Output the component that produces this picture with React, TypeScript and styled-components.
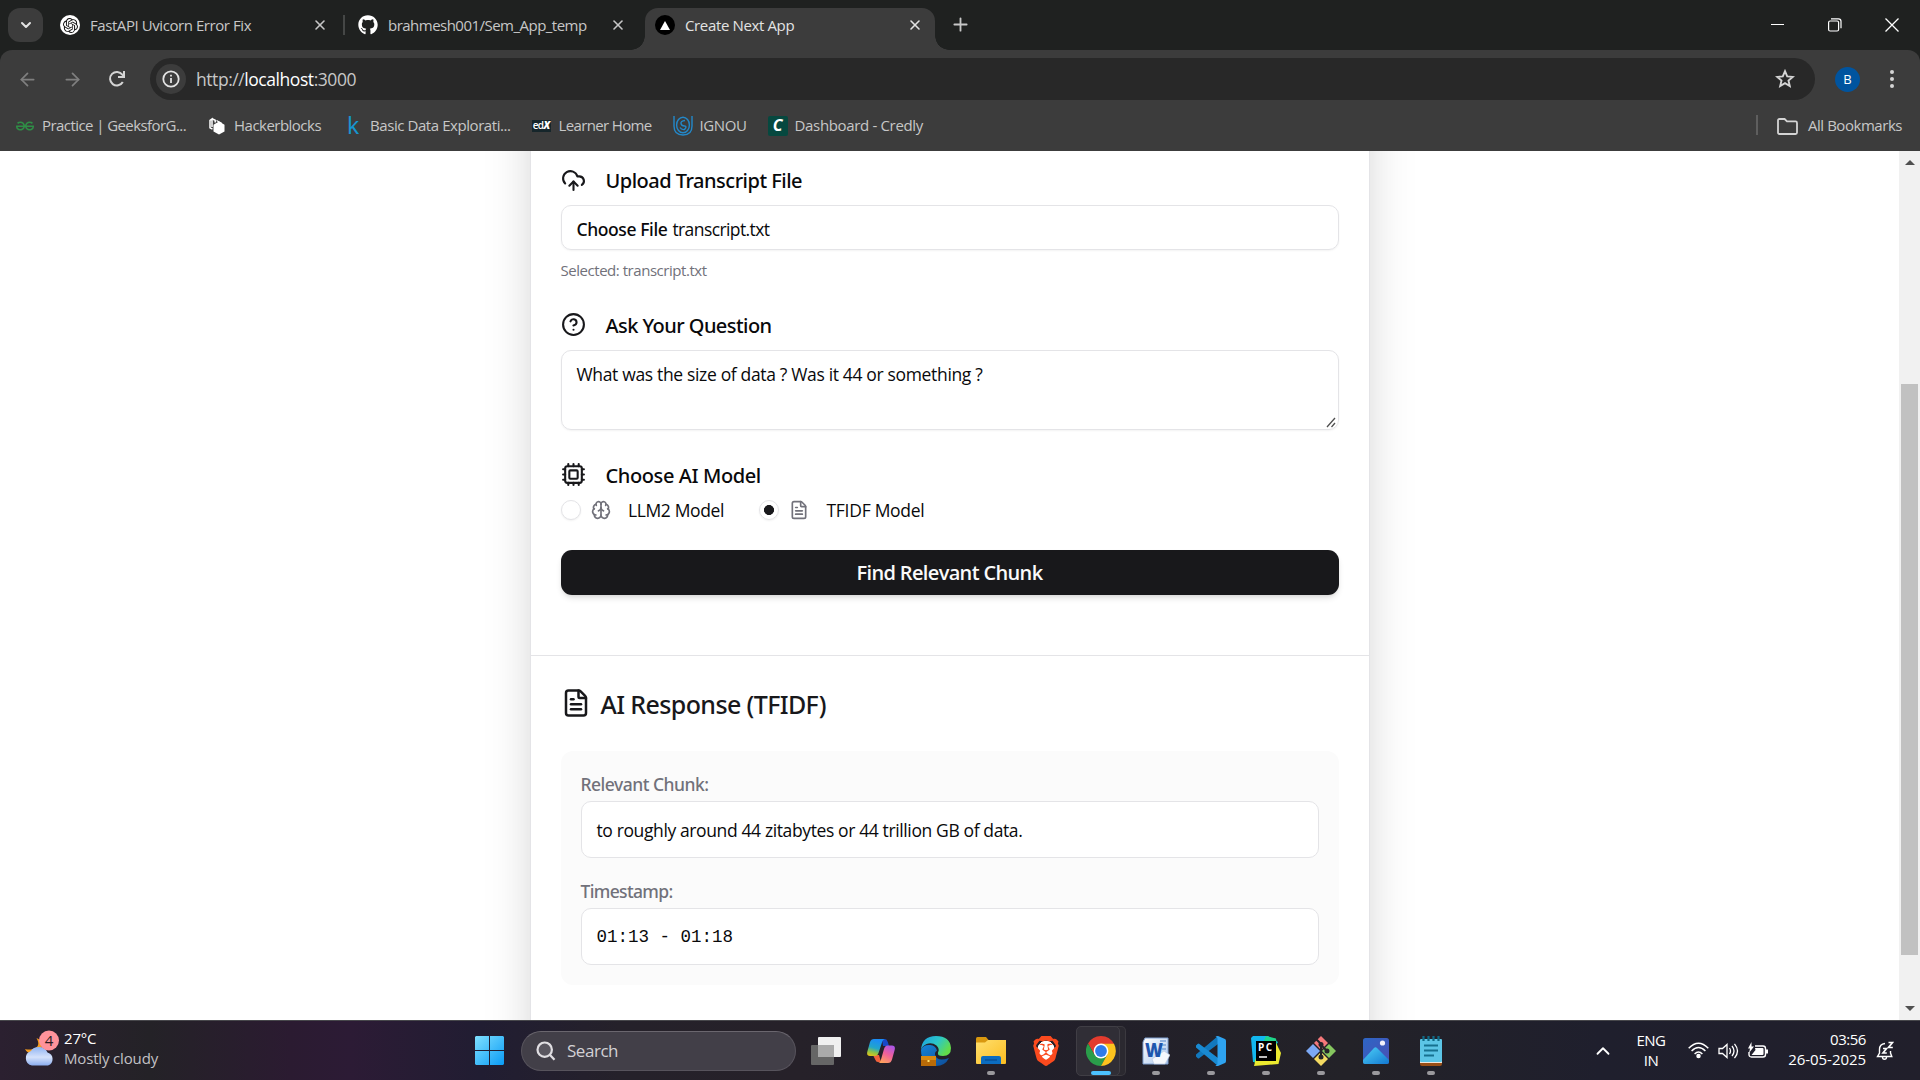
import React from 'react';
import styled, { createGlobalStyle } from 'styled-components';
import {
  ArrowLeft, ArrowRight, ChevronDown, ChevronUp, CloudUpload, CircleHelp, Cpu, Brain, FileText, Plus, X,
} from 'lucide-react';
import { SiOpenai, SiGeeksforgeeks, SiBrave } from 'react-icons/si';
import { FaGithub } from 'react-icons/fa';

const ui = '"Open Sans", "Noto Sans", sans-serif';
const medium = '"Noto Sans", "Open Sans", sans-serif';

const GlobalStyle = createGlobalStyle`
  * { box-sizing: border-box; }
  body { margin: 0; background: #fff; overflow: hidden; font-family: ${ui}; }
  svg { display: block; flex: none; }
`;

const Screen = styled.div`
  width: 1920px;
  height: 1080px;
  display: flex;
  flex-direction: column;
  overflow: hidden;
`;

/* ---------- browser chrome ---------- */

const TabStrip = styled.div`
  height: 50px;
  flex: none;
  background: #1f2120;
  display: flex;
  align-items: flex-start;
  color: #c7c7c7;
`;

const TabSearch = styled.button`
  width: 35px;
  height: 34px;
  margin: 8px 0 0 8px;
  padding: 0;
  border: 0;
  border-radius: 12px;
  background: #3c3c3c;
  color: #e3e3e3;
  display: grid;
  place-items: center;
`;

const Tab = styled.div<{ $width: number; $left: number; $right: number; $active?: boolean }>`
  position: relative;
  width: ${p => p.$width}px;
  height: 42px;
  margin-top: 8px;
  padding: 0 ${p => p.$right}px 8px ${p => p.$left}px;
  display: flex;
  align-items: center;
  gap: 10px;
  border-radius: 13px 13px 0 0;
  background: ${p => (p.$active ? '#3c3c3c' : 'transparent')};
  color: ${p => (p.$active ? '#e3e3e3' : '#c7c7c7')};
  &::before, &::after {
    content: '';
    display: ${p => (p.$active ? 'block' : 'none')};
    position: absolute;
    bottom: 0;
    width: 14px;
    height: 14px;
  }
  &::before { left: -14px; background: radial-gradient(circle at 0 0, transparent 13.5px, #3c3c3c 14px); }
  &::after { right: -14px; background: radial-gradient(circle at 100% 0, transparent 13.5px, #3c3c3c 14px); }
`;

const TabTitle = styled.span<{ $ls: number }>`
  flex: 1;
  font-size: 15px;
  line-height: 20px;
  letter-spacing: ${p => p.$ls}px;
  white-space: nowrap;
`;

const TabDivider = styled.i`
  width: 2px;
  height: 20px;
  margin-top: 15px;
  background: #454746;
`;

const Favicon = styled.span<{ $bg: string; $fg: string }>`
  width: 20px;
  height: 20px;
  flex: none;
  border-radius: 50%;
  background: ${p => p.$bg};
  color: ${p => p.$fg};
  display: grid;
  place-items: center;
`;

const NewTab = styled.span`
  margin: 14px 0 0 15px;
`;

const WindowControls = styled.div`
  margin-left: auto;
  padding: 18px 21px 0 0;
  display: flex;
  gap: 43px;
  color: #fff;
`;

const ToolbarBacking = styled.div`
  flex: none;
  background: #1f2120;
`;

const Toolbar = styled.div`
  height: 58px;
  padding: 8px 20px 8px 17px;
  border-radius: 12px 12px 0 0;
  background: #3c3c3c;
  display: flex;
  align-items: center;
  color: #c7c7c7;
`;

const NavButtons = styled.div`
  width: 133px;
  display: flex;
  gap: 24px;
`;

const NavIcon = styled.span<{ $off?: boolean }>`
  color: ${p => (p.$off ? '#7f7f7f' : '#d4d4d4')};
`;

const AddressBar = styled.div`
  width: 1665px;
  height: 42px;
  padding: 0 20px 0 6px;
  border-radius: 21px;
  background: #282828;
  display: flex;
  align-items: center;
`;

const SiteInfo = styled.span`
  width: 30px;
  height: 30px;
  border-radius: 50%;
  background: #3c3c3c;
  display: grid;
  place-items: center;
`;

const Url = styled.span`
  flex: 1;
  margin-left: 10px;
  font-size: 17.5px;
  letter-spacing: -0.44px;
  line-height: 24px;
  color: #c7c7c7;
  b { font-weight: 400; color: #fff; }
`;

const Avatar = styled.span`
  width: 25px;
  height: 25px;
  margin: 0 29px 0 20px;
  border-radius: 50%;
  background: #00549f;
  color: #fff;
  font: 13px/25px ${ui};
  text-align: center;
`;

const BookmarksBar = styled.div`
  height: 43px;
  flex: none;
  padding: 0 18px 9px 0;
  background: #3c3c3c;
  display: flex;
  align-items: center;
  color: #c7c7c7;
`;

const Bookmark = styled.span<{ $left: number; $gap: number; $ls: number }>`
  margin-left: ${p => p.$left}px;
  display: flex;
  align-items: center;
  gap: ${p => p.$gap}px;
  font-size: 15px;
  line-height: 20px;
  letter-spacing: ${p => p.$ls}px;
  white-space: nowrap;
  svg { margin-top: 2px; }
`;

const KaggleBadge = styled.span`
  width: 12px;
  color: #1795cf;
  font: 400 23px/20px ${medium};
`;

const EdxBadge = styled.span`
  width: 19px;
  height: 12px;
  margin-top: 1px;
  background: #16262b;
  color: #fff;
  font: 600 10px/10px ${ui};
  letter-spacing: -0.7px;
  text-align: center;
  b { font-style: italic; font-weight: 800; }
`;

const CredlyBadge = styled.span`
  width: 20px;
  height: 20px;
  margin-top: 1px;
  border-radius: 2px;
  background: #06483f;
  color: #fff;
  font: italic 700 16px/19px ${ui};
  text-align: center;
`;

const BarDivider = styled.i`
  width: 2.5px;
  height: 20px;
  margin-left: auto;
  background: #5e5e5e;
`;

/* ---------- page ---------- */

const Viewport = styled.div`
  height: 869px;
  flex: none;
  background: #fff;
  display: flex;
  overflow: hidden;
`;

const Page = styled.main`
  flex: 1;
  display: flex;
  justify-content: center;
  overflow: hidden;
`;

const Card = styled.section`
  width: 840px;
  height: 1200px;
  margin-top: -120px;
  padding-top: 134px;
  flex: none;
  background: #fff;
  border: 1px solid #e4e4e7;
  border-top: 0;
  box-shadow: 0 25px 50px -12px rgba(0, 0, 0, 0.25);
`;

const Form = styled.div`
  padding: 0 30px 60px;
  display: flex;
  flex-direction: column;
`;

const FieldLabel = styled.div<{ $top?: number; $ls: number }>`
  height: 30px;
  margin: ${p => p.$top ?? 0}px 0 10px;
  display: flex;
  align-items: center;
  gap: 20px;
  font: 500 20px/30px ${medium};
  letter-spacing: ${p => p.$ls}px;
  color: #09090b;
  padding-top: 1px;
  svg { color: #18181b; margin-bottom: ${p => (p.$top ? 3 : 1)}px; }
`;

const InputBox = styled.div`
  height: 45px;
  padding: 0 15px;
  border: 1px solid #e4e4e7;
  border-radius: 10px;
  box-shadow: 0 1px 2px rgba(0, 0, 0, 0.05);
  font-size: 17.5px;
  line-height: 47px;
  letter-spacing: -0.59px;
  color: #09090b;
`;

const ChooseFile = styled.span`
  margin-right: 5px;
  font-family: ${medium};
  font-weight: 500;
  letter-spacing: -0.4px;
`;

const Hint = styled.div`
  height: 20px;
  margin: 10px 0 1px;
  font-size: 15px;
  line-height: 20px;
  letter-spacing: -0.46px;
  color: #71717a;
`;

const QuestionBox = styled.div`
  position: relative;
  height: 80px;
  padding: 10px 15px;
  border: 1px solid #e4e4e7;
  border-radius: 10px;
  box-shadow: 0 1px 2px rgba(0, 0, 0, 0.05);
  font-size: 17.5px;
  line-height: 26px;
  letter-spacing: -0.34px;
  color: #09090b;
`;

const Grip = styled.svg`
  position: absolute;
  right: 2px;
  bottom: 1px;
`;

const RadioRow = styled.div`
  height: 20px;
  display: flex;
  align-items: center;
`;

const Option = styled.label<{ $width: number; $gap: number; $ls: number }>`
  width: ${p => p.$width}px;
  display: flex;
  align-items: center;
  font-size: 17.5px;
  line-height: 24px;
  letter-spacing: ${p => p.$ls}px;
  color: #09090b;
  svg { margin: 0 ${p => p.$gap}px 0 10px; color: #71717a; }
`;

const Radio = styled.span<{ $checked?: boolean }>`
  width: 20px;
  height: 20px;
  border: 1px solid #e4e4e7;
  border-radius: 50%;
  box-shadow: 0 1px 2px rgba(0, 0, 0, 0.06);
  background: ${p => (p.$checked ? 'radial-gradient(circle, #18181b 4.7px, #fff 5.3px)' : '#fff')};
`;

const SubmitButton = styled.button`
  height: 45px;
  margin-top: 30px;
  padding: 0;
  border: 0;
  border-radius: 11px;
  background: #18181b;
  box-shadow: 0 4px 6px -1px rgba(0, 0, 0, 0.12), 0 2px 4px -2px rgba(0, 0, 0, 0.1);
  color: #fafafa;
  font: 600 20px/45px ${ui};
  letter-spacing: -0.65px;
`;

const Response = styled.div`
  padding: 23px 30px 0;
  border-top: 1px solid #e4e4e7;
`;

const ResponseTitle = styled.h2`
  height: 50px;
  margin: 0 0 22px;
  display: flex;
  align-items: center;
  gap: 10px;
  font: 500 25px/50px ${medium};
  letter-spacing: -0.62px;
  color: #18181b;
  svg { margin-bottom: 2px; }
`;

const Panel = styled.div`
  height: 234px;
  padding: 21px 20px 20px;
  border-radius: 12px;
  background: #fbfbfb;
`;

const PanelLabel = styled.div<{ $top?: number; $ls: number }>`
  height: 25px;
  margin: ${p => p.$top ?? 0}px 0 4px;
  font: 500 17.5px/25px ${medium};
  letter-spacing: ${p => p.$ls}px;
  color: #71717a;
`;

const PanelValue = styled.div<{ $mono?: boolean }>`
  height: 57px;
  padding: 0 15px;
  border: 1px solid #e4e4e7;
  border-radius: 10px;
  background: #fff;
  font-family: ${p => (p.$mono ? '"Liberation Mono", monospace' : ui)};
  font-size: 17.5px;
  line-height: ${p => (p.$mono ? 56 : 57)}px;
  letter-spacing: ${p => (p.$mono ? 0 : -0.38)}px;
  color: #09090b;
`;

const Scrollbar = styled.div`
  width: 21px;
  padding: 9px 0 9px;
  background: #f1f1f1;
  display: flex;
  flex-direction: column;
  align-items: center;
`;

const ScrollThumb = styled.i`
  width: 17px;
  height: 571px;
  margin: 219px 0 auto;
  background: #c1c1c1;
`;

/* ---------- taskbar ---------- */

const Taskbar = styled.footer`
  height: 60px;
  flex: none;
  border-top: 1px solid #47474b;
  background: linear-gradient(90deg, #2b2030 0, #242227 150px, #2b1b31 290px, #2c1b35 350px, #211d32 480px, #25212a 620px, #262129 800px, #221f2a 1000px, #232228 1350px, #1f1f2d 1600px, #211f2b 1920px);
  display: flex;
  align-items: center;
  color: #fff;
`;

const Weather = styled.div`
  width: 475px;
  padding-left: 24px;
  display: flex;
  align-items: center;
  gap: 5px;
  svg { margin-top: -5px; }
`;

const WeatherText = styled.div`
  margin-top: -5px;
  font-size: 15px;
  line-height: 20px;
  letter-spacing: -0.16px;
  small { display: block; font-size: 15px; color: #c3c1c5; }
`;

const SearchPill = styled.div`
  width: 275px;
  height: 40px;
  margin: 0 2px 0 17px;
  padding-left: 14px;
  border: 1px solid #57535c;
  border-top-color: #6a666e;
  border-radius: 20px;
  background: #423f48;
  display: flex;
  align-items: center;
  gap: 11px;
  font-size: 17px;
  letter-spacing: -0.47px;
  color: #d3d1d5;
`;

const AppSlot = styled.div<{ $mark?: string; $markWidth?: number }>`
  position: relative;
  width: 55px;
  height: 59px;
  display: grid;
  place-items: center;
  &::after {
    content: '';
    position: absolute;
    bottom: 5px;
    left: calc(50% - ${p => (p.$markWidth ?? 8) / 2}px);
    width: ${p => p.$markWidth ?? 8}px;
    height: 4px;
    border-radius: 2px;
    background: ${p => p.$mark ?? 'transparent'};
  }
`;

const ActiveTile = styled.div`
  width: 44px;
  height: 50px;
  margin-right: 6px;
  padding-left: 6px;
  border: 1px solid #403e45;
  border-radius: 5px;
  background: #302e36;
  box-shadow: 6px 0 0 -1px #2b2930, 6px 0 0 0 #3b393f;
  display: grid;
  place-items: center;
`;

const Tray = styled.div`
  margin-left: auto;
  padding-right: 26px;
  display: flex;
  align-items: center;
`;

const Language = styled.div`
  width: 40px;
  margin: -1px 17px 0 17px;
  font-size: 15px;
  line-height: 20px;
  letter-spacing: -0.5px;
  text-align: center;
`;

const TrayIcons = styled.div`
  display: flex;
  align-items: center;
  gap: 9px;
`;

const Clock = styled.div`
  width: 98px;
  margin: -4px 10px 0 0;
  font-size: 15px;
  line-height: 20px;
  letter-spacing: -0.05px;
  text-align: right;
  span { display: block; }
  span:first-child { letter-spacing: -0.45px; }
`;

/* ---------- drawings ---------- */

const Reload = () => (
  <svg width="20" height="20" viewBox="0 0 20 20" fill="none" stroke="currentColor" strokeWidth="2">
    <path d="M15.8 13A6.8 6.8 0 1 1 15.3 5.6L17 7.4" /><path d="M17 2v6h-6" />
  </svg>
);
const Info = () => (
  <svg width="18" height="18" viewBox="0 0 18 18" fill="none" stroke="#e3e3e3" strokeWidth="1.8">
    <circle cx="9" cy="9" r="7.7" /><path d="M9 8v5M9 4.8v1.8" />
  </svg>
);
const Star = () => (
  <svg width="20" height="20" viewBox="0 0 20 20" fill="none" stroke="#d4d4d4" strokeWidth="1.9">
    <path d="M10 2.2l2.2 5.2 5.6.5-4.3 3.7 1.3 5.5L10 14.2l-4.8 2.9 1.3-5.5L2.2 7.9l5.6-.5z" />
  </svg>
);
const Dots = () => (
  <svg width="6" height="20" viewBox="0 0 6 20" fill="#d4d4d4">
    <circle cx="3" cy="3" r="2" /><circle cx="3" cy="10" r="2" /><circle cx="3" cy="17" r="2" />
  </svg>
);
const Folder = () => (
  <svg width="21" height="17" viewBox="0 0 21 17" fill="none" stroke="#d4d4d4" strokeWidth="1.8">
    <path d="M1 14.5V2.5Q1 1 2.5 1H7.6L10 3.4h8.6Q20 3.4 20 4.9v9.6Q20 16 18.5 16h-16Q1 16 1 14.5z" />
  </svg>
);
const Minimise = () => <svg width="14" height="14"><path d="M0 6.5h13" stroke="#fff" /></svg>;
const Restore = () => (
  <svg width="14" height="14" fill="none" stroke="#fff" strokeWidth="1.2">
    <rect x=".6" y="3" width="10" height="10" rx="1.5" /><path d="M3 .8h7.5q2.5 0 2.5 2.5v7" />
  </svg>
);
const CloseWindow = () => <svg width="14" height="14" stroke="#fff" strokeWidth="1.3"><path d="M.5 .5l13 13M13.5 .5l-13 13" /></svg>;
const HackerblocksLogo = () => (
  <svg width="16" height="18" viewBox="0 0 16 18">
    <path d="M3.5 12.200L1 10.800V3.400L3 2v8" fill="none" stroke="#fff" strokeWidth="1.500" />
    <path d="M3 1.800l3.200 1.400v2.400" fill="none" stroke="#fff" strokeWidth="1.500" />
    <path d="M10 4.600l5.500 3.200v6.600L10 17.600l-5.500-3.200V7.800z" fill="#fff" />
    <path d="M7.500 3.400l4.800 2.800v3.200" stroke="#fff" strokeWidth="1.200" fill="none" />
  </svg>
);
const IgnouLogo = () => (
  <svg width="20" height="20" viewBox="0 0 20 20" fill="none" stroke="#2388c9" strokeWidth="1.4">
    <path d="M1 0v10q0 9 9 9t9-9V0" /><ellipse cx="10" cy="9" rx="6.400" ry="7.800" />
    <path d="M12 4.500Q7.500 5 8 7.500t3.500 2.500 0 3.500q-3 .5-4.500-2" />
  </svg>
);
const ResizeGrip = () => (
  <Grip width="10" height="11" fill="none" stroke="#4f4f4f" strokeWidth="1.3">
    <path d="M1 10L9 1M5.500 10L9 6" />
  </Grip>
);
const ScrollArrow = ({ down }: { down?: boolean }) => (
  <svg width="10" height="5"><path d={down ? 'M0 0h10L5 5z' : 'M0 5h10L5 0z'} fill="#505050" /></svg>
);
const WeatherIcon = () => (
  <svg width="35" height="37" viewBox="0 0 35 37">
    <defs>
      <linearGradient id="cl" x2="0" y2="1"><stop stopColor="#8fb3f2" /><stop offset=".55" stopColor="#d5e2fb" /><stop offset="1" stopColor="#8aacee" /></linearGradient>
    </defs>
    <path d="M12.500 8q5 9-4 11-3.500 1-7.500 0 2 4.500 8 4.500 9 0 9-9 0-4-5.500-6.500z" fill="#f49b1e" />
    <path d="M8 35.500a7.500 7.500 0 0 1-1-14.500Q9 17 15 17t8.500 5.500A6.800 6.800 0 0 1 24 35.500z" fill="url(#cl)" />
    <circle cx="25" cy="10.500" r="10" fill="#ff939b" />
    <text x="25" y="16" textAnchor="middle" fontFamily={ui} fontSize="15" fill="#2a1a20">4</text>
  </svg>
);
const StartLogo = () => (
  <svg width="29" height="29" viewBox="0 0 29 29">
    <defs><linearGradient id="win" x2="1" y2="1"><stop stopColor="#7fe0ff" /><stop offset="1" stopColor="#0a9bf5" /></linearGradient></defs>
    <path fill="url(#win)" d="M1 0h13v14H0V1zM15 0h13l1 1v13H15zM0 15h14v14H1l-1-1zM15 15h14v13l-1 1H15z" />
  </svg>
);
const SearchGlass = () => (
  <svg width="20" height="20" viewBox="0 0 20 20" fill="#5a5760" stroke="#e0dee2" strokeWidth="2.200">
    <circle cx="8.700" cy="8.700" r="7.200" /><path d="M13.800 13.800l4.700 5" />
  </svg>
);
const TaskView = () => (
  <svg width="30" height="28" viewBox="0 0 30 28">
    <rect y="8" width="23" height="20" rx="1" fill="#666" /><rect x="7" width="23" height="20" rx="1" fill="#f0f0f0" />
    <rect x="7" y="8" width="16" height="12" fill="#aaa" />
  </svg>
);
const Copilot = () => (
  <svg width="28" height="26" viewBox="0 0 28 26">
    <defs>
      <linearGradient id="ca" x1=".3" x2="0" y2="1"><stop stopColor="#1b8df5" /><stop offset=".45" stopColor="#22a6c9" /><stop offset=".7" stopColor="#8bc34a" /><stop offset="1" stopColor="#f7c40a" /></linearGradient>
      <linearGradient id="cb" x1=".8" x2=".3" y2="1"><stop stopColor="#a955e8" /><stop offset=".5" stopColor="#f0609a" /><stop offset="1" stopColor="#ffa25c" /></linearGradient>
    </defs>
    <path d="M15 1h3q2 0 2.800 3L22 8h-6z" fill="#1748c8" />
    <path d="M6 17h6l2 7H11q-2 0-2.800-2.500z" fill="#f2603c" />
    <path d="M7 1h11q-2 0-3 3.500L11.500 15Q10.500 18 8 18H3q-4 0-2.500-5L3 4Q4 1 7 1z" fill="url(#ca)" />
    <path d="M21 25H11q2 0 3-3.500L17 11q1-3.500 3.500-3.500H25q4 0 2.500 5L25 21.500Q24 25 21 25z" fill="url(#cb)" />
  </svg>
);
const Edge = () => (
  <svg width="30" height="30" viewBox="0 0 30 30">
    <defs>
      <linearGradient id="ea" x2="1" y2=".5"><stop stopColor="#1c9fe0" /><stop offset=".55" stopColor="#2bc7c9" /><stop offset="1" stopColor="#62dc4a" /></linearGradient>
      <linearGradient id="eb" x2="1" y2="1"><stop stopColor="#1684d8" /><stop offset="1" stopColor="#0d4b97" /></linearGradient>
    </defs>
    <path d="M0 14Q2 8.500 9 9q6 .5 7 6-2 0-2 3.500 2 8 14 3.500-4 8-13 8Q0 29 0 14z" fill="url(#eb)" />
    <path d="M0 14Q1 0 15 0t15 12q0 8-8 8-6 0-5-3.500 2-3.500-1.500-7Q11 6 5.500 8 1 10 0 14z" fill="url(#ea)" />
    <rect y="20" width="15" height="10" fill="#b96b08" /><path d="M0 20h15v4H0z" fill="#d98a12" /><rect x="6.500" y="24" width="2" height="2" fill="#ffe26b" />
  </svg>
);
const Explorer = () => (
  <svg width="30" height="27" viewBox="0 0 30 27">
    <defs><linearGradient id="fo" x2="1" y2="1"><stop stopColor="#ffdf6e" /><stop offset="1" stopColor="#fbbd20" /></linearGradient></defs>
    <path d="M0 1.500Q0 0 1.500 0H10l3 3.500V8H0z" fill="#d9980f" /><path d="M0 5.500h9L12 3h18v23q0 1-1 1H1q-1 0-1-1z" fill="url(#fo)" />
    <path d="M5 27v-6q0-2 2-2h16q2 0 2 2v6z" fill="#0b6cc0" /><path d="M9 23h12" stroke="#084c91" strokeWidth="1.300" />
  </svg>
);
const BraveBadge = styled.span`
  width: 30px;
  height: 30px;
  display: grid;
  place-items: center;
  background: radial-gradient(ellipse 9px 10px at 50% 48%, #fff 95%, transparent);
  color: #fb4a1e;
`;
const Chrome = () => (
  <svg width="30" height="30" viewBox="0 0 30 30">
    <path d="M15 0a15 15 0 0 0-13 7.500L8.500 18.700 15 8h13A15 15 0 0 0 15 0z" fill="#e33b2e" />
    <path d="M2 7.500A15 15 0 0 0 15 30l6.200-11.200L15 22.500 8.500 18.700z" fill="#2a9d4a" />
    <path d="M28 7.800A15 15 0 0 1 15 30l6.300-11.400Q23.500 12 15 7.800z" fill="#fcc31e" />
    <circle cx="15" cy="15" r="7.400" fill="#fff" /><circle cx="15" cy="15" r="5.900" fill="#2f7bea" />
  </svg>
);
const Word = () => (
  <svg width="28" height="28" viewBox="0 0 28 28">
    <defs><linearGradient id="wd" x2="1" y2="1"><stop stopColor="#fff" /><stop offset="1" stopColor="#a9c6ec" /></linearGradient></defs>
    <path d="M3 1h23v26H1V5z" fill="url(#wd)" stroke="#7f9fd0" /><path d="M18 4h6M19 8h5M20 12h4" stroke="#7ba2d8" strokeWidth="1.500" />
    <path d="M10 22l12-8 6 4-5 9H12z" fill="#f5f8fd" stroke="#b4c5df" strokeWidth=".6" />
    <text x="3" y="20" fontFamily={ui} fontWeight="800" fontSize="19" textLength="18" lengthAdjust="spacingAndGlyphs" fill="#1f56ad">W</text>
  </svg>
);
const VsCode = () => (
  <svg width="30" height="30" viewBox="0 0 30 30">
    <path d="M22 0v8L3.500 22Q2.500 23 1.500 22L0 20.500q-1-1 0-2z" fill="#1278bd" />
    <path d="M22 30v-8L3.500 8Q2.500 7 1.500 8L0 9.500q-1 1 0 2z" fill="#198ad2" />
    <path d="M22 0l7 3q1 .6 1 2v20q0 1.400-1 2l-7 3q-2 .3-2.500-1 2 .5 2-1.500v-25Q21.500 .8 19.500 1 20 0 22 0z" fill="#2ea3f0" />
  </svg>
);
const PyCharm = () => (
  <svg width="30" height="30" viewBox="0 0 30 30">
    <path d="M0 2l2-2h15l10 6-13 20H2z" fill="#12b7ee" /><path d="M15 0l10 2.500L27 14 7 29 3 26z" fill="#1ed68a" />
    <path d="M25 7l5 10-2.500 11L3 30l2-8z" fill="#edea2f" /><rect x="5" y="5" width="20" height="20" />
    <text x="7" y="15" fontFamily={ui} fontWeight="700" fontSize="10" textLength="14" fill="#fff">PC</text><path d="M8 21h8" stroke="#fff" strokeWidth="1.500" />
  </svg>
);
const GitLogo = () => (
  <svg width="30" height="30" viewBox="0 0 30 30">
    <path d="M15 0l7 7-7 7-7-7z" fill="#f4787a" /><path d="M7 8l7 7-7 7-7-7z" fill="#7ca9f5" />
    <path d="M23 8l7 7-7 7-7-7z" fill="#85c65f" /><path d="M15 16l7 7-7 7-7-7z" fill="#f3da62" />
    <path d="M9 2l6 6v14M15 9l6 6" stroke="#24232a" strokeWidth="2" fill="none" />
    <circle cx="15" cy="8.500" r="2.500" fill="#24232a" /><circle cx="15" cy="21" r="2.500" fill="#24232a" /><circle cx="21" cy="15" r="2.500" fill="#24232a" />
  </svg>
);
const Photos = () => (
  <svg width="26" height="26" viewBox="0 0 26 26">
    <defs>
      <linearGradient id="ph" x2="1" y2="1"><stop stopColor="#2d66c5" /><stop offset="1" stopColor="#4b4fb4" /></linearGradient>
      <linearGradient id="mt" x2="1" y2="1"><stop stopColor="#4dd0f7" /><stop offset="1" stopColor="#1378d1" /></linearGradient>
    </defs>
    <rect width="26" height="26" rx="2.500" fill="url(#ph)" /><path d="M0 22l11-12q1.500-1.500 3 0L26 22v2q0 2-2 2H2q-2 0-2-2z" fill="url(#mt)" />
    <circle cx="19.500" cy="5" r="2.600" fill="#f3f0fa" />
  </svg>
);
const Notepad = () => (
  <svg width="22" height="30" viewBox="0 0 22 30">
    <path d="M0 26h22v2q0 2-2 2H2q-2 0-2-2z" fill="#9a4f17" /><path d="M0 25h22v2H0z" fill="#efe6dc" />
    <rect y="3" width="22" height="23" rx="1" fill="#5cc5e6" />
    <path d="M3.500 0v5M8.500 0v5M13.500 0v5M18.500 0v5" stroke="#106a86" strokeWidth="2.200" />
    <path d="M4 9.500h14M4 14.500h14M4 19.500h10" stroke="#16718f" strokeWidth="1.800" />
  </svg>
);
const Wifi = () => (
  <svg width="21" height="17" viewBox="0 0 21 17" fill="none" stroke="#fff" strokeWidth="1.500">
    <path d="M.7 6.200q9.800-10 19.600 0M3.600 9q6.900-7 13.800 0M6.600 12q3.900-4 7.800 0" /><circle cx="10.500" cy="14" r="1.500" fill="#fff" />
  </svg>
);
const Volume = () => (
  <svg width="21" height="18" viewBox="0 0 21 18" fill="none" stroke="#fff" strokeWidth="1.300">
    <path d="M1 6.500h3.500L9 2.500v13l-4.500-4H1z" /><path d="M11.500 6q2 3 0 6M14 4q4 5 0 10M16.500 1.800q6 7.200 0 14.400" />
  </svg>
);
const Battery = () => (
  <svg width="20" height="17" viewBox="0 0 20 17">
    <path d="M7 4h8q2.500 0 2.500 2.500v6Q17.500 15 15 15H3.500Q1 15 1 12.500V10" fill="none" stroke="#fff" strokeWidth="1.400" />
    <path d="M7 6h7.500q1 0 1 1v5q0 1-1 1H3.500l4-5z" fill="#fff" /><path d="M18 7.500h2v4h-2zM3.500 0L0 6.500h2L1 11l5-6.500H3.500z" fill="#fff" />
  </svg>
);
const Bell = () => (
  <svg width="18" height="20" viewBox="0 0 18 20" fill="none" stroke="#fff" strokeWidth="1.400">
    <path d="M9 2.500Q3.500 3 3.500 8.500V12L1.500 15.500h14.300L14.500 12v-2" /><path d="M6.500 16q0 2.200 2 2.200t2-2.200" />
    <path d="M7 7.500h3.500L7 12h3.800M12.500 1.500h4L12.500 6.500h4.300" strokeWidth="1.700" />
  </svg>
);

const grey = '#9a999d';

export default function App() {
  return (
    <Screen>
      <GlobalStyle />
      <TabStrip>
        <TabSearch><ChevronDown size={16} strokeWidth={3} /></TabSearch>
        <Tab $width={300} $left={17} $right={15}>
          <Favicon $bg="#fff" $fg="#111"><SiOpenai size={15} /></Favicon>
          <TabTitle $ls={-0.43}>FastAPI Uvicorn Error Fix</TabTitle>
          <X size={16} strokeWidth={2.4} />
        </Tab>
        <TabDivider />
        <Tab $width={300} $left={13} $right={19}>
          <Favicon $bg="transparent" $fg="#fff"><FaGithub size={20} /></Favicon>
          <TabTitle $ls={-0.52}>brahmesh001/Sem_App_temp</TabTitle>
          <X size={16} strokeWidth={2.4} />
        </Tab>
        <Tab $width={290} $left={10} $right={12} $active>
          <Favicon $bg="#000" $fg="#fff"><svg width="10" height="9"><path d="M5 0l5 9H0z" fill="#fff" /></svg></Favicon>
          <TabTitle $ls={-0.36}>Create Next App</TabTitle>
          <X size={16} strokeWidth={2.4} />
        </Tab>
        <NewTab><Plus size={21} strokeWidth={2.1} /></NewTab>
        <WindowControls><Minimise /><Restore /><CloseWindow /></WindowControls>
      </TabStrip>
      <ToolbarBacking>
        <Toolbar>
          <NavButtons>
            <NavIcon $off><ArrowLeft size={21} /></NavIcon>
            <NavIcon $off><ArrowRight size={21} /></NavIcon>
            <NavIcon><Reload /></NavIcon>
          </NavButtons>
          <AddressBar>
            <SiteInfo><Info /></SiteInfo>
            <Url>http://<b>localhost</b>:3000</Url>
            <Star />
          </AddressBar>
          <Avatar>B</Avatar>
          <Dots />
        </Toolbar>
      </ToolbarBacking>
      <BookmarksBar>
        <Bookmark $left={16} $gap={8} $ls={-0.57}><SiGeeksforgeeks size={18} color="#2f8d46" />Practice | GeeksforG...</Bookmark>
        <Bookmark $left={23} $gap={9} $ls={-0.52}><HackerblocksLogo />Hackerblocks</Bookmark>
        <Bookmark $left={26} $gap={11} $ls={-0.43}><KaggleBadge>k</KaggleBadge>Basic Data Explorati...</Bookmark>
        <Bookmark $left={21} $gap={8} $ls={-0.65}><EdxBadge>ed<b>X</b></EdxBadge>Learner Home</Bookmark>
        <Bookmark $left={21} $gap={7} $ls={-0.4}><IgnouLogo />IGNOU</Bookmark>
        <Bookmark $left={21} $gap={7} $ls={-0.34}><CredlyBadge>C</CredlyBadge>Dashboard - Credly</Bookmark>
        <BarDivider />
        <Bookmark $left={19} $gap={10} $ls={-0.46}><Folder />All Bookmarks</Bookmark>
      </BookmarksBar>

      <Viewport>
        <Page>
          <Card>
            <Form>
              <FieldLabel $ls={-0.5}><CloudUpload size={25} />Upload Transcript File</FieldLabel>
              <InputBox><ChooseFile>Choose File</ChooseFile>transcript.txt</InputBox>
              <Hint>Selected: transcript.txt</Hint>
              <FieldLabel $top={29} $ls={-0.56}><CircleHelp size={25} />Ask Your Question</FieldLabel>
              <QuestionBox>What was the size of data ? Was it 44 or something ?<ResizeGrip /></QuestionBox>
              <FieldLabel $top={30} $ls={-0.4}><Cpu size={25} />Choose AI Model</FieldLabel>
              <RadioRow>
                <Option $width={198} $gap={17.5} $ls={-0.38}><Radio /><Brain size={20} />LLM2 Model</Option>
                <Option $width={200} $gap={18} $ls={-0.28}><Radio $checked /><FileText size={20} />TFIDF Model</Option>
              </RadioRow>
              <SubmitButton>Find Relevant Chunk</SubmitButton>
            </Form>
            <Response>
              <ResponseTitle><FileText size={30} />AI Response (TFIDF)</ResponseTitle>
              <Panel>
                <PanelLabel $ls={-0.5}>Relevant Chunk:</PanelLabel>
                <PanelValue>to roughly around 44 zitabytes or 44 trillion GB of data.</PanelValue>
                <PanelLabel $top={21} $ls={-0.66}>Timestamp:</PanelLabel>
                <PanelValue $mono>01:13 - 01:18</PanelValue>
              </Panel>
            </Response>
          </Card>
        </Page>
        <Scrollbar><ScrollArrow /><ScrollThumb /><ScrollArrow down /></Scrollbar>
      </Viewport>

      <Taskbar>
        <Weather>
          <WeatherIcon />
          <WeatherText>27°C<small>Mostly cloudy</small></WeatherText>
        </Weather>
        <StartLogo />
        <SearchPill><SearchGlass />Search</SearchPill>
        <AppSlot><TaskView /></AppSlot>
        <AppSlot><Copilot /></AppSlot>
        <AppSlot><Edge /></AppSlot>
        <AppSlot $mark={grey}><Explorer /></AppSlot>
        <AppSlot><BraveBadge><SiBrave size={30} /></BraveBadge></AppSlot>
        <AppSlot $mark="#4cc2ff" $markWidth={20}><ActiveTile><Chrome /></ActiveTile></AppSlot>
        <AppSlot $mark={grey}><Word /></AppSlot>
        <AppSlot $mark={grey}><VsCode /></AppSlot>
        <AppSlot $mark={grey}><PyCharm /></AppSlot>
        <AppSlot $mark={grey}><GitLogo /></AppSlot>
        <AppSlot $mark={grey}><Photos /></AppSlot>
        <AppSlot $mark={grey}><Notepad /></AppSlot>
        <Tray>
          <ChevronUp size={22} strokeWidth={2} />
          <Language>ENG<br />IN</Language>
          <TrayIcons><Wifi /><Volume /><Battery /></TrayIcons>
          <Clock><span>03:56</span><span>26-05-2025</span></Clock>
          <Bell />
        </Tray>
      </Taskbar>
    </Screen>
  );
}
